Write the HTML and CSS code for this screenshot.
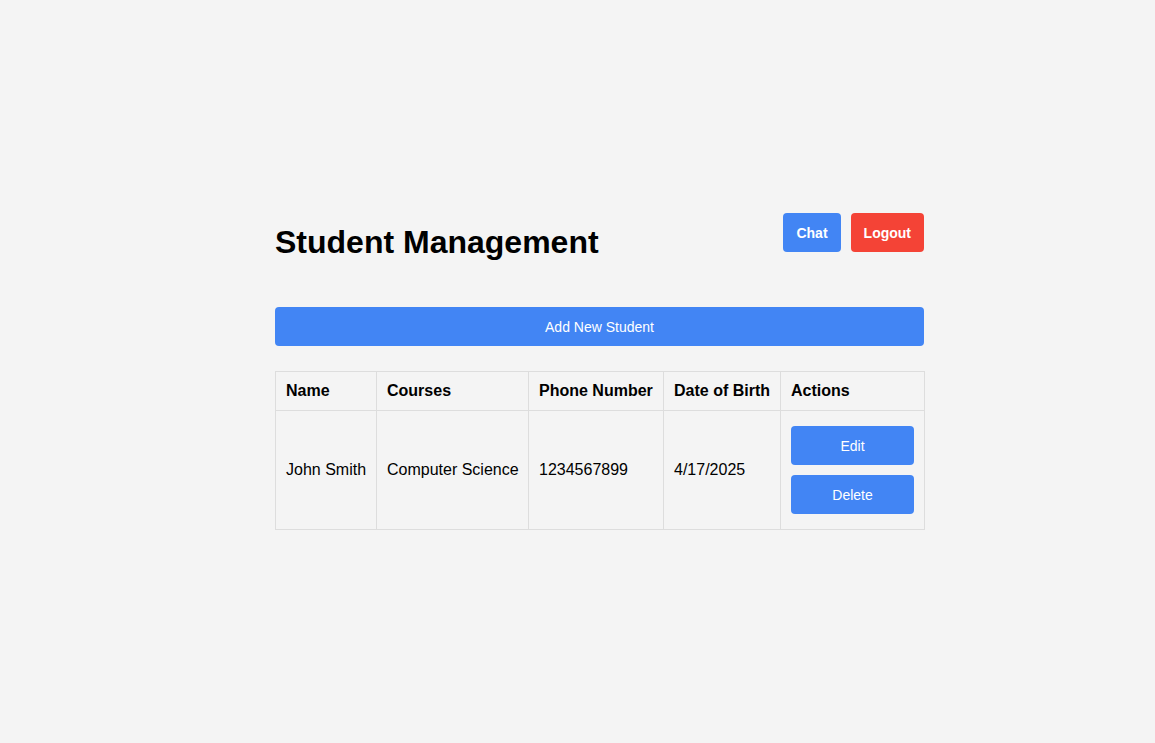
FILE: index.html
```html
<!DOCTYPE html>
<html lang="en">
<head>
<meta charset="utf-8">
<title>Student Management</title>
<link rel="stylesheet" href="styles.css">
</head>
<body>
<main class="container">
  <header class="header">
    <h1 class="title">Student Management</h1>
    <div class="header-actions">
      <button class="btn btn-blue btn-bold">Chat</button>
      <button class="btn btn-red btn-bold">Logout</button>
    </div>
  </header>
  <button class="btn btn-blue btn-wide">Add New Student</button>
  <table class="table">
    <colgroup>
      <col class="col-name">
      <col class="col-courses">
      <col class="col-phone">
      <col class="col-dob">
      <col class="col-actions">
    </colgroup>
    <thead>
      <tr>
        <th>Name</th>
        <th>Courses</th>
        <th>Phone Number</th>
        <th>Date of Birth</th>
        <th>Actions</th>
      </tr>
    </thead>
    <tbody>
      <tr>
        <td>John Smith</td>
        <td>Computer Science</td>
        <td>1234567899</td>
        <td>4/17/2025</td>
        <td class="actions">
          <div class="action-stack">
            <button class="btn btn-blue btn-action">Edit</button>
            <button class="btn btn-blue btn-action">Delete</button>
          </div>
        </td>
      </tr>
    </tbody>
  </table>
</main>
</body>
</html>
```
FILE: styles.css
```css
* { box-sizing: border-box; }

html, body {
  margin: 0;
  padding: 0;
}

body {
  background: #f4f4f4;
  font-family: "Liberation Sans", Arial, sans-serif;
  color: #000;
  min-height: 100vh;
  display: flex;
  align-items: center;
}

.container {
  width: 649px;
  margin-left: 275px;
}

.header {
  display: flex;
  justify-content: space-between;
  align-items: flex-start;
  margin-bottom: 46px;
}

.title {
  font-size: 32px;
  font-weight: bold;
  margin: 11px 0 0;
  line-height: 37px;
}

.header-actions {
  display: flex;
  gap: 10px;
}

.btn {
  font-family: "Liberation Sans", Arial, sans-serif;
  font-size: 14px;
  color: #fff;
  border: none;
  border-radius: 4px;
  height: 39px;
  padding: 0 13px;
  cursor: pointer;
}

.btn-bold { font-weight: bold; }

.btn-blue { background: #4285f4; }
.btn-red { background: #f44336; }

.btn-wide {
  display: block;
  width: 100%;
  margin-bottom: 25px;
}

.table {
  width: 100%;
  table-layout: fixed;
  border-collapse: collapse;
  font-size: 16px;
}

.col-name { width: 101px; }
.col-courses { width: 152px; }
.col-phone { width: 135px; }
.col-dob { width: 117px; }
.col-actions { width: 144px; }

.table th,
.table td {
  border: 1px solid #ddd;
  padding: 10px;
  text-align: left;
  line-height: 18px;
  white-space: nowrap;
}

.table th { font-weight: bold; }

.action-stack {
  display: flex;
  flex-direction: column;
  gap: 10px;
  padding: 5px 0;
}

.btn-action {
  display: block;
  width: 100%;
}
```
